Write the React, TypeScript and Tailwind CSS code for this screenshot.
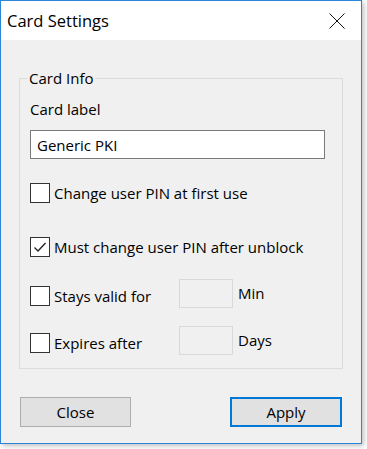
const font = { fontFamily: '"Open Sans", "Noto Sans", sans-serif' };

const Checkbox = ({ checked = false }: { checked?: boolean }) => (
  <span className="flex h-[20px] w-[20px] shrink-0 items-center justify-center border border-[#333333] bg-white">
    {checked && (
      <svg width="16" height="16" viewBox="0 0 16 16" fill="none">
        <path d="M2.5 8.5 L6 12 L13.5 4" stroke="#222" strokeWidth="1.3" />
      </svg>
    )}
  </span>
);

const CheckRow = ({ label, checked }: { label: string; checked?: boolean }) => (
  <label className="flex h-[20px] items-center gap-[4px]">
    <Checkbox checked={checked} />
    <span>{label}</span>
  </label>
);

const TimedRow = ({ label, unit }: { label: string; unit: string }) => (
  <div className="flex h-[29px] items-center">
    <div className="mt-[4px] flex w-[149px] items-center gap-[4px]">
      <Checkbox />
      <span>{label}</span>
    </div>
    <div className="h-[29px] w-[54px] border border-[#d9d9d9] bg-[#f0f0f0]" />
    <span className="ml-[5px] -mt-[2px]">{unit}</span>
  </div>
);

export default function App() {
  return (
    <div className="h-[449px] w-[367px] bg-white" style={font}>
      <div className="flex h-[444px] w-[362px] flex-col border border-[#2b87d6] bg-[#f0f0f0] text-[15px] leading-[20px] text-black shadow-[2px_2px_5px_rgba(0,0,0,0.25)]">
        <div className="flex h-[39px] items-center justify-between bg-white pl-[6px] pr-[16px]">
          <span className="text-[16.5px]">Card Settings</span>
          <svg width="16" height="16" viewBox="0 0 16 16" fill="none">
            <path d="M0.5 0.5 L15.5 15.5 M15.5 0.5 L0.5 15.5" stroke="#111" strokeWidth="1" />
          </svg>
        </div>

        <fieldset className="mx-[18px] mt-[28px] h-[301px] border border-[#dcdcdc] pl-[10px] pr-[17px]">
          <legend className="-ml-[3px] px-[2px]">Card Info</legend>
          <div className="mt-[11px]">Card label</div>
          <div className="mt-[11px] flex h-[29px] items-center border border-[#7a7a7a] bg-white px-[6px]">
            Generic PKI
          </div>
          <div className="mt-[24px]">
            <CheckRow label="Change user PIN at first use" />
          </div>
          <div className="mt-[34px]">
            <CheckRow label="Must change user PIN after unblock" checked />
          </div>
          <div className="mt-[22px]">
            <TimedRow label="Stays valid for" unit="Min" />
          </div>
          <div className="mt-[18px]">
            <TimedRow label="Expires after" unit="Days" />
          </div>
        </fieldset>

        <div className="mx-[19px] mt-[28px] flex justify-between">
          <button className="h-[30px] w-[111px] border border-[#adadad] bg-[#e1e1e1]">Close</button>
          <button className="h-[30px] w-[112px] border-2 border-[#0078d7] bg-[#e1e1e1]">Apply</button>
        </div>
      </div>
    </div>
  );
}
